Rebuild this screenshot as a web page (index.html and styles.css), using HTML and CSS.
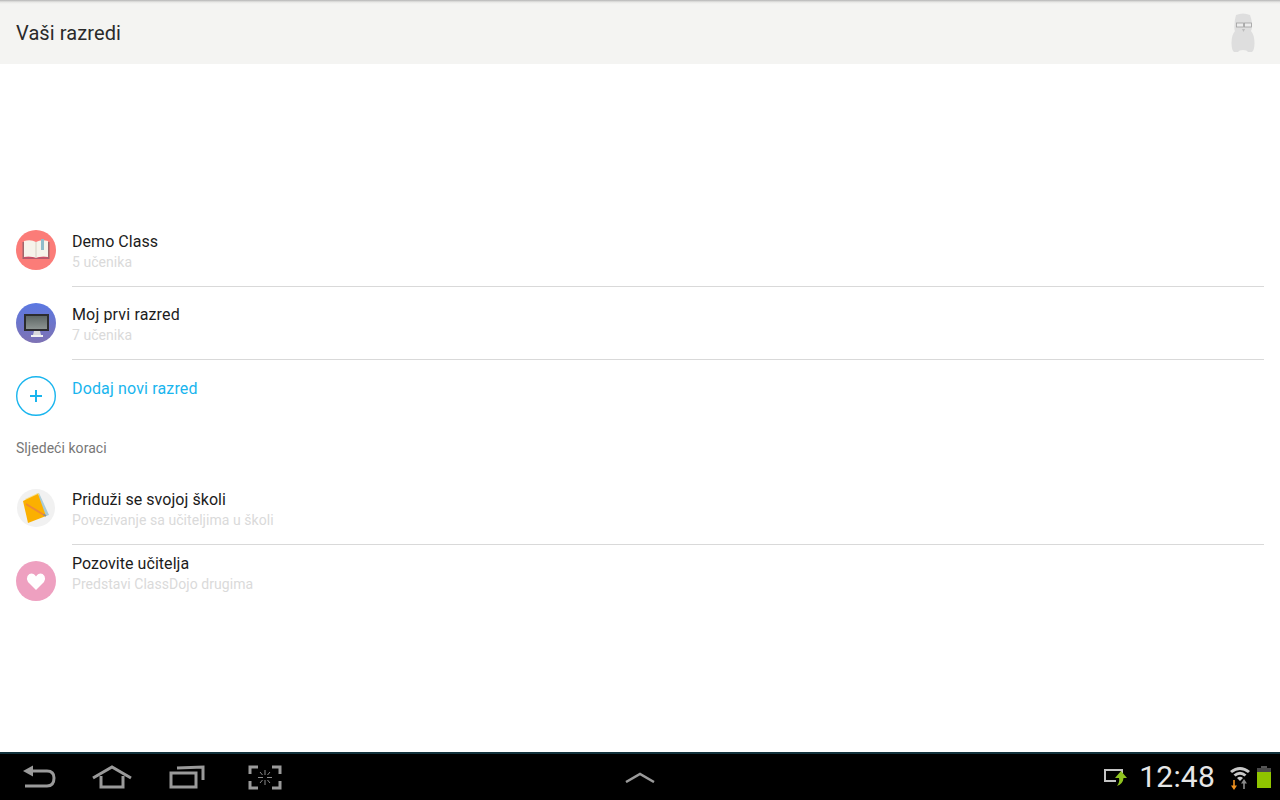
FILE: index.html
```html
<!DOCTYPE html>
<html lang="en">
<head>
    <meta charset="UTF-8">
    <meta name="viewport" content="width=device-width, initial-scale=1.0">
    <title>Vaši razredi</title>
    <link rel="stylesheet" href="styles.css">
</head>
<body>
    <header class="topbar">
        <h1>Vaši razredi</h1>
        <svg class="avatar" width="30" height="42" viewBox="0 0 30 42">
            <path d="M8 3 Q15 0 22 3 Q24 8 24 13 Q24 17 23 19 Q26.500 23 26.500 31 Q26.500 38 24 40 L6 40 Q3.500 38 3.500 31 Q3.500 23 7 19 Q6 17 6.500 13 Q6.500 8 8 3 Z" fill="#dedede"/>
            <path d="M10 40 Q11 38 15 38 Q19 38 20 40 L20 41 L10 41 Z" fill="#f4f4f2"/>
            <rect x="8.500" y="11" width="7" height="4" fill="#ececec" stroke="#a0a0a0" stroke-width="0.800"/>
            <rect x="16.500" y="11" width="7" height="4" fill="#ececec" stroke="#a0a0a0" stroke-width="0.800"/>
            <path d="M14 17 L17 17 L15.500 20 Z" fill="#bcbcbc"/>
        </svg>
    </header>

    <main class="content">
        <div class="row divided">
            <svg class="icon" width="40" height="40" viewBox="0 0 40 40">
                <circle cx="20" cy="20" r="20" fill="#fb7c78"/>
                <path d="M6.500 12 L8 12 L8 27 L19 28 L21 28 L32 27 L32 12 L33.500 12 L33.500 29 L6.500 29 Z" fill="#a0656a"/>
                <path d="M8 11 Q15 9 20 12 Q25 9 32 11 L32 27 Q25 26 20 28 Q15 26 8 27 Z" fill="#f6f3ea"/>
                <path d="M20 12 L20 28" stroke="#d4cfc2" stroke-width="1"/>
                <rect x="25" y="9" width="3" height="11" fill="#8fbccb"/>
                <path d="M8 27 Q15 26 20 28 Q25 26 32 27 L32 28.500 L8 28.500 Z" fill="#c9506a"/>
            </svg>
            <div class="text">
                <div class="title">Demo Class</div>
                <div class="sub">5 učenika</div>
            </div>
        </div>
        <div class="row divided">
            <svg class="icon" width="40" height="40" viewBox="0 0 40 40">
                <defs>
                    <linearGradient id="blueBg" x1="0" y1="0" x2="0" y2="1">
                        <stop offset="0" stop-color="#5b78e2"/>
                        <stop offset="1" stop-color="#7e72b4"/>
                    </linearGradient>
                    <linearGradient id="screenBg" x1="0" y1="0" x2="0" y2="1">
                        <stop offset="0" stop-color="#5d6664"/>
                        <stop offset="1" stop-color="#8d9492"/>
                    </linearGradient>
                </defs>
                <circle cx="20" cy="20" r="20" fill="url(#blueBg)"/>
                <rect x="8" y="11" width="25" height="17" fill="#2c2c2e"/>
                <rect x="10" y="13" width="21" height="13" fill="url(#screenBg)"/>
                <path d="M18 28 L24 28 L25 32 L17 32 Z" fill="#d8d8dc"/>
                <rect x="15" y="32" width="12" height="2" fill="#f2f2f2"/>
            </svg>
            <div class="text">
                <div class="title wide">Moj prvi razred</div>
                <div class="sub">7 učenika</div>
            </div>
        </div>
        <div class="row">
            <svg class="icon" width="40" height="40" viewBox="0 0 40 40">
                <circle cx="20" cy="20" r="19.300" fill="none" stroke="#19b5ee" stroke-width="1.400"/>
                <path d="M20 14 L20 26 M14 20 L26 20" stroke="#19b5ee" stroke-width="2"/>
            </svg>
            <div class="text">
                <div class="title add">Dodaj novi razred</div>
            </div>
        </div>

        <div class="section">Sljedeći koraci</div>

        <div class="row divided">
            <svg class="icon" width="40" height="40" viewBox="0 0 40 40">
                <circle cx="20" cy="20" r="19" fill="#f1f1f1"/>
                <path d="M20 6 L23 5 L33 27 L30 28 Z" fill="#a9cbd8"/>
                <path d="M9 11 L22 5 L24 7 L11 13 Z" fill="#f7e08a"/>
                <path d="M7 13 L22 6 L30 28 L12 35 Z" fill="#fbb000"/>
                <path d="M10 16 L28 27" stroke="#ef8a34" stroke-width="2"/>
                <path d="M27.500 26.500 L30 28" stroke="#8f8f8f" stroke-width="2"/>
            </svg>
            <div class="text">
                <div class="title">Priduži se svojoj školi</div>
                <div class="sub">Povezivanje sa učiteljima u školi</div>
            </div>
        </div>
        <div class="row">
            <svg class="icon" width="40" height="40" viewBox="0 0 40 40">
                <circle cx="20" cy="20" r="20" fill="#eea0c0"/>
                <path d="M20 29 L12 21 Q10 18 11.500 15 Q14 11.500 17.500 13 Q19 13.700 20 15.500 Q21 13.700 22.500 13 Q26 11.500 28.500 15 Q30 18 28 21 Z" fill="#ffffff"/>
            </svg>
            <div class="text raised">
                <div class="title">Pozovite učitelja</div>
                <div class="sub">Predstavi ClassDojo drugima</div>
            </div>
        </div>
    </main>

    <nav class="navbar">
        <div class="nav-left">
            <svg width="34" height="24" viewBox="0 0 34 24">
                <path d="M1 6 L11 0.500 L11 11.500 Z" fill="#9a9a9a"/>
                <path d="M9 6 L25 6 Q32 6 32 13 Q32 21 25 21 L3 21" fill="none" stroke="#9a9a9a" stroke-width="3"/>
            </svg>
            <svg class="home" width="40" height="24" viewBox="0 0 40 24">
                <path d="M1 13 L20 2 L39 13" fill="none" stroke="#9a9a9a" stroke-width="3"/>
                <path d="M9 11 L9 22 L31 22 L31 11" fill="none" stroke="#9a9a9a" stroke-width="3"/>
            </svg>
            <svg width="36" height="24" viewBox="0 0 36 24">
                <rect x="2" y="8" width="25" height="14" fill="none" stroke="#9a9a9a" stroke-width="3"/>
                <path d="M8 3 L34 2 L34 15" fill="none" stroke="#9a9a9a" stroke-width="3"/>
            </svg>
            <svg class="capture" width="34" height="25" viewBox="0 0 34 25">
                <path d="M10 2 L2 2 L2 9 M24 2 L32 2 L32 9 M2 16 L2 23 L10 23 M32 16 L32 23 L24 23" fill="none" stroke="#9a9a9a" stroke-width="3"/>
                <path d="M17 5 L17 10 M17 15 L17 20 M10 12.500 L15 12.500 M19 12.500 L24 12.500 M12 7 L14.500 10 M22 7 L19.500 10 M12 18 L14.500 15 M22 18 L19.500 15" stroke="#8a8a8a" stroke-width="1"/>
            </svg>
        </div>
        <div class="nav-center">
            <svg width="30" height="12" viewBox="0 0 30 12">
                <path d="M1 11 L15 3 L29 11" fill="none" stroke="#9a9a9a" stroke-width="2.500"/>
            </svg>
        </div>
        <div class="nav-right">
            <svg class="cast" width="24" height="20" viewBox="0 0 24 20">
                <path d="M13 14 L2 14 L2 3 L19 3 L19 6" fill="none" stroke="#c4c4c4" stroke-width="2"/>
                <path d="M18 4 L24 11 L20.500 11 Q20 17 14 19 Q17 15 16 11 L12 11 Z" fill="#8fc31f"/>
            </svg>
            <span class="clock">12:48</span>
            <svg class="wifi" width="22" height="26" viewBox="0 0 22 26">
                <path d="M1 7 Q11 -1 21 7 L19 9 Q11 3 3 9 Z" fill="#c8c8c8"/>
                <path d="M4.500 10.500 Q11 5 17.500 10.500 L15.500 12.500 Q11 9 6.500 12.500 Z" fill="#c8c8c8"/>
                <path d="M8 14 Q11 11.500 14 14 L11 17 Z" fill="#c8c8c8"/>
                <path d="M5 26 L2 21.500 L4.200 21.500 L4.200 16 L5.800 16 L5.800 21.500 L8 21.500 Z" fill="#f0921e"/>
                <path d="M15 15 L18 19.500 L15.800 19.500 L15.800 25 L14.200 25 L14.200 19.500 L12 19.500 Z" fill="#8a8a8a"/>
            </svg>
            <svg class="battery" width="14" height="22" viewBox="0 0 14 22">
                <rect x="4" y="0" width="6" height="3" fill="#555555"/>
                <rect x="0" y="2" width="14" height="4" fill="#4a4a4a"/>
                <rect x="0" y="6" width="14" height="16" fill="#8fc400"/>
            </svg>
        </div>
    </nav>
</body>
</html>
```

FILE: styles.css
```css
html, body {
    height: 100%;
    margin: 0;
}
body {
    display: flex;
    flex-direction: column;
    background-color: #ffffff;
    color: #1c1c1c;
    font-family: Roboto, 'Liberation Sans', sans-serif;
    overflow: hidden;
}
.topbar {
    height: 64px;
    box-sizing: border-box;
    padding: 2px 16px 0;
    display: flex;
    justify-content: space-between;
    align-items: center;
    background: linear-gradient(#b4b4b4, #e6e6e4 2px, #f4f4f2 4px);
}
.topbar h1 {
    margin: 0;
    font-size: 20px;
    font-weight: 400;
    letter-spacing: 0.1px;
    color: #2a2a2a;
}
.avatar {
    display: block;
    margin-right: 6px;
    filter: blur(0.4px);
}
.content {
    flex: 1;
    padding: 150px 16px 0;
}
.row {
    display: flex;
    align-items: flex-start;
    gap: 16px;
    padding: 16px 0;
}
.row.divided {
    background: linear-gradient(#d9d9d9, #d9d9d9) no-repeat 56px 100% / calc(100% - 56px) 1px;
    padding-bottom: 17px;
}
.icon {
    flex: none;
    display: block;
}
.text {
    height: 40px;
    padding-top: 2px;
    box-sizing: border-box;
}
.text.raised {
    margin-top: -9px;
}
.title {
    font-size: 16px;
    line-height: 20px;
    letter-spacing: 0.05px;
    color: #1c1c1c;
}
.title.wide {
    letter-spacing: 0.15px;
}
.title.add {
    margin-top: 1px;
    letter-spacing: 0.15px;
    color: #19b5ee;
}
.sub {
    font-size: 14px;
    line-height: 20px;
    letter-spacing: 0.05px;
    color: #dadada;
}
.section {
    height: 32px;
    line-height: 32px;
    margin-bottom: 8px;
    font-size: 14px;
    letter-spacing: 0.05px;
    color: #777777;
}
.navbar {
    height: 48px;
    box-sizing: border-box;
    border-top: 2px solid #12323c;
    background-color: #000000;
    display: grid;
    grid-template-columns: 1fr auto 1fr;
    align-items: center;
}
.nav-left {
    display: flex;
    gap: 37px;
    padding-left: 22px;
}
.home {
    margin-left: -1px;
}
.capture {
    margin-left: 6px;
}
.navbar svg {
    display: block;
}
.nav-right {
    display: flex;
    justify-content: flex-end;
    align-items: center;
    padding-right: 9px;
}
.cast {
    margin-right: 12px;
}
.clock {
    font-size: 30px;
    line-height: 46px;
    letter-spacing: 0.2px;
    color: #e6e6e6;
    margin-right: 14px;
}
.wifi {
    margin-right: 6px;
}
```
